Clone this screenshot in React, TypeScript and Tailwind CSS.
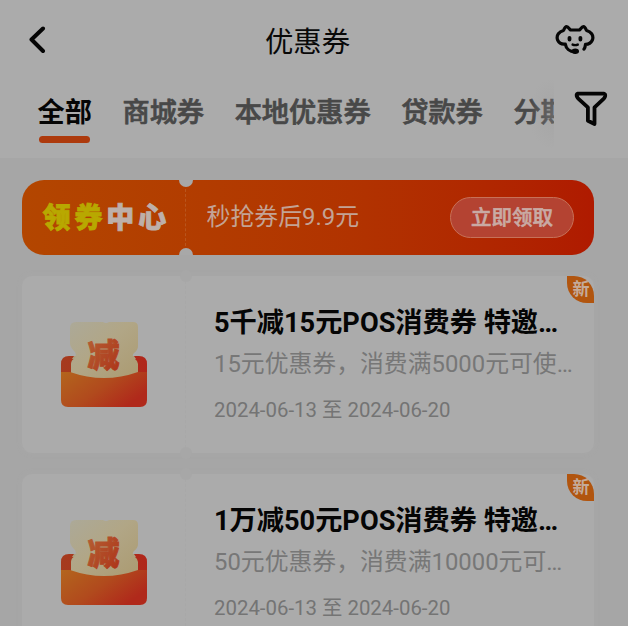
import { useState } from "react";

interface Coupon {
  id: number;
  title: string;
  desc: string;
  period: string;
}

const tabs = ["全部", "商城券", "本地优惠券", "贷款券", "分期"];

const coupons: Coupon[] = [
  {
    id: 1,
    title: "5千减15元POS消费券 特邀…",
    desc: "15元优惠券，消费满5000元可使…",
    period: "2024-06-13 至 2024-06-20",
  },
  {
    id: 2,
    title: "1万减50元POS消费券 特邀…",
    desc: "50元优惠券，消费满10000元可…",
    period: "2024-06-13 至 2024-06-20",
  },
];

function BackIcon() {
  return (
    <svg width="18" height="28" viewBox="0 0 18 28" fill="none" stroke="#050505" strokeWidth="4" strokeLinecap="round" strokeLinejoin="round">
      <path d="M15 2.500 3.500 13.500l11.500 11.500" />
    </svg>
  );
}

function ServiceIcon() {
  return (
    <svg width="40" height="32" viewBox="0 0 40 32" fill="none" stroke="#050505" strokeWidth="3.200" strokeLinecap="round" strokeLinejoin="round">
      <path d="M20 27.800C14.500 27.800 11 24.500 10.300 20C6.500 20.500 4 19 2.600 16C.8 11 4.500 7.500 8.500 6.500C9.300 4.500 10.300 2.600 11.600 2.600C13 2.600 14 4.300 15.500 6H24.500C26 4.300 27 2.600 28.400 2.600C29.700 2.600 30.700 4.500 31.500 6.500C35.500 7.500 39.200 11 37.400 16C36 19 33.500 20.300 30.500 20.300C30.300 22.500 29.900 23.700 29 25.100" />
      <path d="M14.500 13.800v1.700M25.400 13.800v1.700" strokeWidth="3.800" />
      <path d="M17.600 20.600c1.700.7 3.500.7 5.200 0" strokeWidth="2.400" />
      <ellipse cx="20.300" cy="27.200" rx="3.700" ry="2.700" fill="#050505" stroke="none" />
    </svg>
  );
}

function FilterIcon() {
  return (
    <svg width="34" height="36" viewBox="0 0 34 36" fill="none" stroke="#050505" strokeWidth="3.800" strokeLinejoin="round">
      <path d="M3.800 2.600H29.700Q31.700 3 31.100 5.300Q30.500 7 29.300 8.100L20.500 16.300V33L13.900 29.800V16.300L4.800 8.100Q3.500 7 2.800 5.300Q2.200 3 3.800 2.600Z" />
    </svg>
  );
}

function EnvelopeIcon({ id }: { id: number }) {
  return (
    <svg width="88" height="88" viewBox="0 0 88 88">
      <defs>
        <linearGradient id={`front-${id}`} x1="0" y1="0" x2="1" y2=".55">
          <stop offset="0" stopColor="#b3651d" />
          <stop offset=".55" stopColor="#b14a1d" />
          <stop offset="1" stopColor="#b0291b" />
        </linearGradient>
        <linearGradient id={`back-${id}`} x1="0" y1="0" x2="1" y2="0">
          <stop offset="0" stopColor="#a53b1e" />
          <stop offset="1" stopColor="#b0261b" />
        </linearGradient>
        <linearGradient id={`paper-${id}`} x1="0" y1="0" x2="1" y2="1">
          <stop offset="0" stopColor="#aca998" />
          <stop offset=".45" stopColor="#b1a686" />
          <stop offset="1" stopColor="#ab9a70" />
        </linearGradient>
        <linearGradient id={`word-${id}`} x1="0" y1="0" x2="1" y2="1">
          <stop offset="0" stopColor="#b56335" />
          <stop offset="1" stopColor="#ad3218" />
        </linearGradient>
      </defs>
      <path d="M1 57V43Q1 35 9 35H79Q87 35 87 43V57Z" fill={`url(#back-${id})`} />
      <path d="M14 35H74L76 38H12Z" fill="#aba07f" />
      <path d="M16 1H43Q46 3 49 1H73Q78 1 78 6V25Q78 29 74 32Q71 35 75 38Q78 40 78 43V60H11V43Q11 39 15 37Q17 33 14 30Q10 26 10 22V7Q10 1 16 1Z" fill={`url(#paper-${id})`} />
      <path d="M1 51H10Q44 63 78 51H87V79Q87 86 80 86H8Q1 86 1 79Z" fill={`url(#front-${id})`} />
      <text x="43.500" y="46" textAnchor="middle" fontSize="32" fontWeight="900" fontFamily="'Noto Sans CJK SC', sans-serif" fill={`url(#word-${id})`} stroke={`url(#word-${id})`} strokeWidth=".9">
        减
      </text>
    </svg>
  );
}

function Banner() {
  return (
    <div className="relative flex h-[75px] items-center overflow-hidden rounded-[22px] bg-linear-to-r from-[#b34600] via-[#b13200] via-60% to-[#af1a00]">
      <div className="absolute -top-[7px] left-[157px] size-[14px] rounded-full bg-[#a8a8a8]" />
      <div className="absolute -bottom-[7px] left-[157px] size-[14px] rounded-full bg-[#a8a8a8]" />
      <div className="flex h-[57px] w-[164px] items-center border-r border-dashed border-[#b9551d] pt-[2px] pl-[20.500px] text-[28px] leading-none font-black tracking-[3.900px] whitespace-nowrap">
        <span className="text-[#b8a800] [-webkit-text-stroke:0.800px_#b8a800]">领券</span>
        <span className="text-[#bdb0aa] [-webkit-text-stroke:0.800px_#bdb0aa]">中心</span>
      </div>
      <span className="ml-[20.500px] text-[23.900px] text-[#c3a395]">秒抢券后9.9元</span>
      <button className="mr-[20px] ml-auto h-[41px] w-[124px] rounded-full border border-[#c77158] bg-[#b44332] pt-px text-[20.500px] font-medium text-[#c9aaa4] [-webkit-text-stroke:0.600px_#c9aaa4]">
        立即领取
      </button>
    </div>
  );
}

function CouponCard({ coupon }: { coupon: Coupon }) {
  return (
    <div className="relative flex h-[177px] shrink-0 rounded-[10px] bg-[#ababab] shadow-[0_0_5px_#a8a8a8]">
      <div className="absolute -top-[6px] left-[158px] size-[12px] rounded-full bg-[#a7a7a7]" />
      <div className="absolute -bottom-[6px] left-[158px] size-[12px] rounded-full bg-[#a7a7a7]" />
      <div className="w-[164px] border-r border-dashed border-[#a8a8a8] pt-[45px] pl-[38px]">
        <EnvelopeIcon id={coupon.id} />
      </div>
      <div className="flex flex-col pt-[27px] pl-[28px] whitespace-nowrap">
        <h2 className="text-[27.200px] leading-[40px] font-bold text-[#050505]">{coupon.title}</h2>
        <p className="text-[23.850px] leading-[42px] text-[#777777]">{coupon.desc}</p>
        <p className="mt-[10px] text-[20.400px] leading-[30px] text-[#747474]">{coupon.period}</p>
      </div>
      <span className="absolute top-0 right-0 flex size-[27px] items-center justify-center rounded-tr-[20px] rounded-bl-[20px] bg-[#b1550f] pl-px text-[17px] leading-none font-bold text-[#c4aa99]">
        新
      </span>
    </div>
  );
}

export default function App() {
  const [active, setActive] = useState(0);

  return (
    <div className="flex h-[626px] w-[628px] flex-col overflow-hidden bg-[#a6a6a6] font-[Roboto,'Noto_Sans_CJK_SC',sans-serif]">
      <header className="h-[158px] shrink-0 bg-[#ababab]">
        <div className="flex h-[80px] items-center justify-between pr-[33px] pl-[28px]">
          <button className="w-[40px]">
            <BackIcon />
          </button>
          <h1 className="mr-[8px] pt-[6px] text-[28.400px] text-[#090909]">优惠券</h1>
          <button className="w-[40px]">
            <ServiceIcon />
          </button>
        </div>
        <div className="flex h-[78px]">
          <nav className="relative flex w-[554px] gap-[30.600px] overflow-hidden pl-[37.500px]">
            {tabs.map((tab, i) => (
              <button
                key={tab}
                onClick={() => setActive(i)}
                className={`flex shrink-0 flex-col items-center pt-[13px] text-[27.200px] leading-[41px] ${
                  i === active
                    ? "font-bold text-[#050505]"
                    : "font-medium text-[#484848] [-webkit-text-stroke:0.700px_#484848]"
                }`}
              >
                {tab}
                {i === active && <span className="mt-[2px] h-[7px] w-[51px] rounded-full bg-[#ad3a0d]" />}
              </button>
            ))}
            <div className="absolute top-0 right-0 h-[68px] w-[24px] bg-radial-[at_100%_50%] from-[#9c9c9c60] to-transparent to-75%" />
          </nav>
          <button className="flex h-[58px] w-[74px] items-center pl-[20px]">
            <FilterIcon />
          </button>
        </div>
      </header>

      <main className="flex flex-col gap-[21px] pt-[22px] pr-[34px] pl-[22px]">
        <Banner />
        {coupons.map((coupon) => (
          <CouponCard key={coupon.id} coupon={coupon} />
        ))}
      </main>
    </div>
  );
}
